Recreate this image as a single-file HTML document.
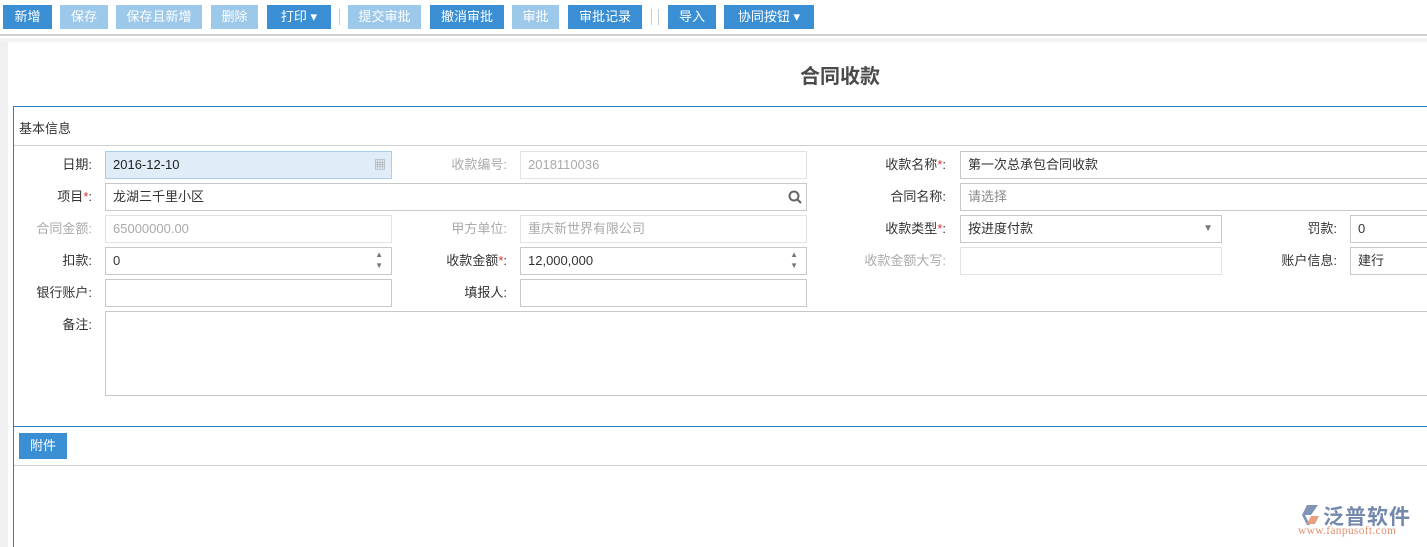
<!DOCTYPE html>
<html><head><meta charset="utf-8"><style>
*{margin:0;padding:0;box-sizing:border-box}
body{width:1427px;height:547px;overflow:hidden;background:#fff;position:relative;font-family:"Liberation Sans","Noto Sans CJK SC",sans-serif;font-size:13px;color:#333}
.a{position:absolute}
.btn{position:absolute;top:5px;height:24px;line-height:24px;color:#fff;text-align:center;font-size:13px;background:#3a8fd4}
.dis{background:#9cc8ea}
.sep{position:absolute;top:9px;width:1px;height:16px;background:#ccc}
.lbl{position:absolute;text-align:right;width:90px;line-height:28px;height:28px}
.g{color:#aaa}
.inp{position:absolute;height:28px;border:1px solid #c8c8c8;line-height:26px;padding-left:7px;background:#fff}
.inp.d{border-color:#e2e2e2;color:#aaa}
.r{color:#e03030}
</style></head><body>
<div class="a" style="left:0;top:0;width:1427px;height:36px;background:#fff;border-bottom:2px solid #d0d0d0"></div>
<div class="btn" style="left:3px;width:49px">新增</div>
<div class="btn dis" style="left:60px;width:48px">保存</div>
<div class="btn dis" style="left:116px;width:86px">保存且新增</div>
<div class="btn dis" style="left:211px;width:47px">删除</div>
<div class="btn" style="left:267px;width:64px">打印 ▾</div>
<div class="sep" style="left:339px"></div>
<div class="btn dis" style="left:348px;width:73px">提交审批</div>
<div class="btn" style="left:430px;width:74px">撤消审批</div>
<div class="btn dis" style="left:512px;width:47px">审批</div>
<div class="btn" style="left:568px;width:74px">审批记录</div>
<div class="sep" style="left:651px"></div><div class="sep" style="left:658px"></div>
<div class="btn" style="left:668px;width:48px">导入</div>
<div class="btn" style="left:724px;width:90px">协同按钮 ▾</div>
<div class="a" style="left:0;top:38px;width:8px;height:509px;background:#f0f0f0"></div>
<div class="a" style="left:0;top:38px;width:1427px;height:4px;background:#f3f3f3"></div>
<div class="a" style="left:0;top:60px;width:1680px;text-align:center;font-size:20px;font-weight:bold;color:#4a4a4a">合同收款</div>
<div class="a" style="left:13px;top:106px;width:1414px;height:441px;border-left:1px solid #2f7dc0;border-top:1px solid #2f7dc0"></div>
<div class="a" style="left:19px;top:118px">基本信息</div>
<div class="a" style="left:14px;top:145px;width:1413px;height:1px;background:#d0d0d0"></div>

<div class="lbl" style="left:2px;top:151px">日期:</div>
<div class="inp" style="left:105px;top:151px;width:287px;background:#e0edf8;border-color:#a8cfef;color:#222">2016-12-10<span style="position:absolute;right:5px;top:0;color:#999;font-size:12px">▦</span></div>
<div class="lbl g" style="left:417px;top:151px">收款编号:</div>
<div class="inp d" style="left:520px;top:151px;width:287px">2018110036</div>
<div class="lbl" style="left:856px;top:151px">收款名称<span class="r">*</span>:</div>
<div class="inp" style="left:960px;top:151px;width:480px">第一次总承包合同收款</div>

<div class="lbl" style="left:2px;top:183px">项目<span class="r">*</span>:</div>
<div class="inp" style="left:105px;top:183px;width:702px">龙湖三千里小区<svg style="position:absolute;right:4px;top:6px" width="14" height="14"><circle cx="6" cy="6" r="4.5" fill="none" stroke="#666" stroke-width="2"/><path d="M9 9l4 4" stroke="#666" stroke-width="2"/></svg></div>
<div class="lbl" style="left:856px;top:183px">合同名称:</div>
<div class="inp" style="left:960px;top:183px;width:480px;color:#888">请选择</div>

<div class="lbl g" style="left:2px;top:215px">合同金额:</div>
<div class="inp d" style="left:105px;top:215px;width:287px">65000000.00</div>
<div class="lbl g" style="left:417px;top:215px">甲方单位:</div>
<div class="inp d" style="left:520px;top:215px;width:287px">重庆新世界有限公司</div>
<div class="lbl" style="left:856px;top:215px">收款类型<span class="r">*</span>:</div>
<div class="inp" style="left:960px;top:215px;width:262px">按进度付款<span style="position:absolute;right:8px;top:0;color:#777;font-size:10px">▼</span></div>
<div class="lbl" style="left:1247px;top:215px">罚款:</div>
<div class="inp" style="left:1350px;top:215px;width:90px">0</div>

<div class="lbl" style="left:2px;top:247px">扣款:</div>
<div class="inp" style="left:105px;top:247px;width:287px">0<span style="position:absolute;right:8px;top:1px;font-size:8px;line-height:11px;color:#777">▲<br>▼</span></div>
<div class="lbl" style="left:417px;top:247px">收款金额<span class="r">*</span>:</div>
<div class="inp" style="left:520px;top:247px;width:287px">12,000,000<span style="position:absolute;right:8px;top:1px;font-size:8px;line-height:11px;color:#777">▲<br>▼</span></div>
<div class="lbl g" style="left:856px;top:247px">收款金额大写:</div>
<div class="inp d" style="left:960px;top:247px;width:262px"></div>
<div class="lbl" style="left:1247px;top:247px">账户信息:</div>
<div class="inp" style="left:1350px;top:247px;width:90px">建行</div>

<div class="lbl" style="left:2px;top:279px">银行账户:</div>
<div class="inp" style="left:105px;top:279px;width:287px"></div>
<div class="lbl" style="left:417px;top:279px">填报人:</div>
<div class="inp" style="left:520px;top:279px;width:287px"></div>

<div class="lbl" style="left:2px;top:311px">备注:</div>
<div class="inp" style="left:105px;top:311px;width:1340px;height:85px"></div>

<div class="a" style="left:14px;top:426px;width:1413px;height:1px;background:#2f7dc0"></div>
<div class="btn" style="left:19px;top:433px;width:48px;height:26px;line-height:26px">附件</div>
<div class="a" style="left:14px;top:465px;width:1413px;height:1px;background:#d0d0d0"></div>

<svg class="a" style="left:1298px;top:503px" width="24" height="24"><path d="M9 2h11l-7 10h-6z" fill="#8094b8"/><path d="M4 12l5-10 3 0-5 10 5 10h-3z" fill="#8094b8"/><path d="M13 13h8l-4 8h-8z" fill="#e8a080"/></svg>
<div class="a" style="left:1323px;top:501px;font-size:21px;color:#7488ad;letter-spacing:1px;font-weight:bold">泛普软件</div>
<div class="a" style="left:1298px;top:525px;font-size:11.5px;color:#e09070;font-family:'Liberation Serif',serif;letter-spacing:0.3px">www.fanpusoft.com</div>
</body></html>
